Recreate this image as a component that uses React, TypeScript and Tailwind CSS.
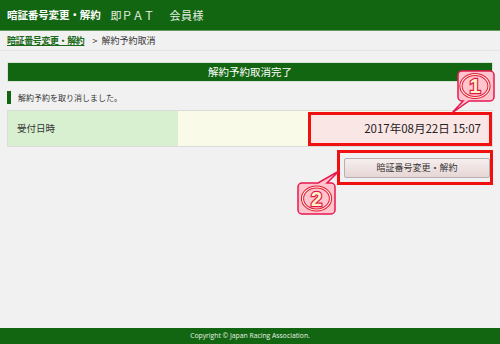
import React from "react";

function Badge({ n }: { n: string }) {
  return (
    <>
      <ellipse cx="0" cy="0" rx="14" ry="11.5" fill="none" stroke="#e01848" strokeWidth="3.2" />
      <ellipse cx="0" cy="0" rx="14" ry="11.5" fill="none" stroke="#fff3c4" strokeWidth="1.2" />
      <text
        x="0"
        y="7"
        textAnchor="middle"
        fontSize="20"
        fontWeight="bold"
        fontFamily="'Liberation Sans', sans-serif"
        fill="#fff3c4"
        stroke="#e01848"
        strokeWidth="2.4"
        paintOrder="stroke"
      >
        {n}
      </text>
    </>
  );
}

export default function App() {
  return (
    <div
      className="relative flex h-[344px] w-[500px] flex-col overflow-hidden bg-[#f1f1f1] text-[#333]"
      style={{ fontFamily: "'Noto Sans CJK JP', 'Noto Sans', sans-serif" }}
    >
      {/* header */}
      <div className="flex h-[31px] items-center border-b border-[#5f9c59] bg-[#136611] px-[7px] text-white">
        <span className="text-[10.5px] font-bold tracking-[-0.1px]">暗証番号変更・解約</span>
        <span className="ml-[10px] text-[11px] text-[#e6f0e4]">即ＰＡＴ</span>
        <span className="ml-[15px] text-[11px] tracking-[0.5px] text-[#e6f0e4]">会員様</span>
      </div>
      {/* breadcrumb */}
      <div className="flex h-[20px] items-center border-b border-[#e1e8e1] px-[7px] text-[9px]">
        <span className="text-[#1a6a17] underline font-bold tracking-[-0.4px]">暗証番号変更・解約</span>
        <span className="ml-[8px] text-[#333]">&gt;&nbsp;&nbsp;解約予約取消</span>
      </div>

      {/* main */}
      <div className="px-[7px] pt-[11px]">
        <div className="flex h-[20px] items-center justify-center border border-[#d9e2d9] bg-[#136611] text-[10.5px] text-white">
          解約予約取消完了
        </div>
        <div className="mt-[9px] flex items-center">
          <div className="h-[13px] w-[4px] bg-[#136611]" />
          <span className="ml-[7px] text-[8px] text-[#333]">解約予約を取り消しました。</span>
        </div>
        <div className="mt-[6px] flex h-[37px] border border-[#dcdcdc]">
          <div className="flex w-[170px] items-center bg-[#d8f0d0] pl-[9px] text-[9.5px]">受付日時</div>
          <div className="flex flex-1 items-center justify-end bg-[#fafae8] py-[1px] pr-0">
            <div className="flex h-[34px] w-[184px] items-center justify-end border-[3px] border-[#f01010] bg-[#fbe6e6] pr-[8px] text-[11.5px] text-[#222]">
              2017年08月22日 15:07
            </div>
          </div>
        </div>
        <div className="mt-[3px] flex justify-end">
          <div className="flex h-[35px] w-[156px] items-center justify-end border-[3px] border-[#f01010] pr-0">
            <div className="flex h-[20px] w-[146px] items-center justify-center rounded-[2px] border border-[#b8b0b0] bg-gradient-to-b from-[#f6eeee] to-[#e7d6d6] text-[9px] text-[#333]">
              暗証番号変更・解約
            </div>
          </div>
        </div>
      </div>

      {/* footer */}
      <div className="mt-auto flex h-[16px] items-center justify-center bg-[#136611] text-[6.8px] text-[#e8f0e8]" style={{ fontFamily: "'Open Sans', 'Noto Sans', sans-serif" }}>
        Copyright © Japan Racing Association.
      </div>

      {/* callout 1 */}
      <svg className="absolute left-[445px] top-[66px]" width="55" height="52" viewBox="0 0 55 52">
        <path
          d="M17 5 h28 a4 4 0 0 1 4 4 v22 a4 4 0 0 1 -4 4 h-21 l-17 12 l11 -12 h-1 a4 4 0 0 1 -4 -4 v-22 a4 4 0 0 1 4 -4 z"
          fill="#ffc4cc"
          stroke="#e81850"
          strokeWidth="1.5"
        />
        <g transform="translate(30 20)">
          <Badge n="1" />
        </g>
      </svg>

      {/* callout 2 */}
      <svg className="absolute left-[294px] top-[168px]" width="50" height="52" viewBox="0 0 50 52">
        <path
          d="M8 15 h16 l21 -12 l-12 12 h4 a4 4 0 0 1 4 4 v23 a4 4 0 0 1 -4 4 h-29 a4 4 0 0 1 -4 -4 v-23 a4 4 0 0 1 4 -4 z"
          fill="#ffc4cc"
          stroke="#e81850"
          strokeWidth="1.5"
        />
        <g transform="translate(22.5 30.5)">
          <Badge n="2" />
        </g>
      </svg>
    </div>
  );
}
